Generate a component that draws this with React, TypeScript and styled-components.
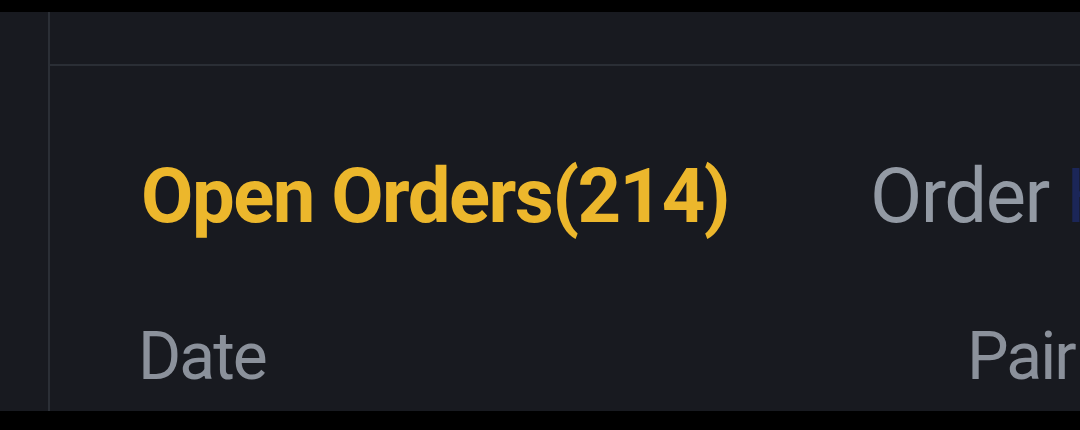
import React from "react";
import styled, { createGlobalStyle } from "styled-components";

const Global = createGlobalStyle`
  html, body {
    margin: 0;
    padding: 0;
    background: #000;
  }
  body {
    font-family: Roboto, "Liberation Sans", sans-serif;
  }
`;

const Frame = styled.div`
  width: 1080px;
  height: 430px;
  padding-top: 12px;
  box-sizing: border-box;
  overflow: hidden;
  background: #000;
`;

const Panel = styled.div`
  height: 399px;
  display: grid;
  grid-template-columns: 48px 2px 1fr;
  background: #181a20;
  overflow: hidden;
`;

const Gutter = styled.div`
  background: #181a20;
`;

const Divider = styled.div`
  background: #2b2f36;
`;

const Main = styled.div`
  display: flex;
  flex-direction: column;
  min-width: 0;
  overflow: hidden;
`;

const TopBar = styled.div`
  height: 52px;
  border-bottom: 2px solid #2a2e35;
  flex-shrink: 0;
`;

const Tabs = styled.div`
  display: flex;
  align-items: flex-start;
  padding: 92px 0 0 91px;
  white-space: nowrap;
`;

const Tab = styled.div<{ $active?: boolean; $width?: number }>`
  flex-shrink: 0;
  width: ${(p) => (p.$width ? `${p.$width}px` : "auto")};
  font-size: 76px;
  line-height: 1;
  font-weight: ${(p) => (p.$active ? 700 : 400)};
  color: ${(p) => (p.$active ? "#ecb72c" : "#939aa4")};
  letter-spacing: -1.5px;
`;

const Faded = styled.span`
  color: #1b2658;
`;

const Columns = styled.div`
  display: flex;
  padding: 90px 0 0 88px;
  white-space: nowrap;
`;

const ColHead = styled.div<{ $width?: number }>`
  flex-shrink: 0;
  width: ${(p) => (p.$width ? `${p.$width}px` : "auto")};
  font-size: 66px;
  line-height: 1;
  color: #8b919b;
  letter-spacing: -2px;
`;

export default function App() {
  return (
    <Frame>
      <Global />
      <Panel>
        <Gutter />
        <Divider />
        <Main>
          <TopBar />
          <Tabs>
            <Tab $active $width={729}>
              Open Orders(214)
            </Tab>
            <Tab>
              Order <Faded>History</Faded>
            </Tab>
          </Tabs>
          <Columns>
            <ColHead $width={829}>Date</ColHead>
            <ColHead>Pair</ColHead>
          </Columns>
        </Main>
      </Panel>
    </Frame>
  );
}
